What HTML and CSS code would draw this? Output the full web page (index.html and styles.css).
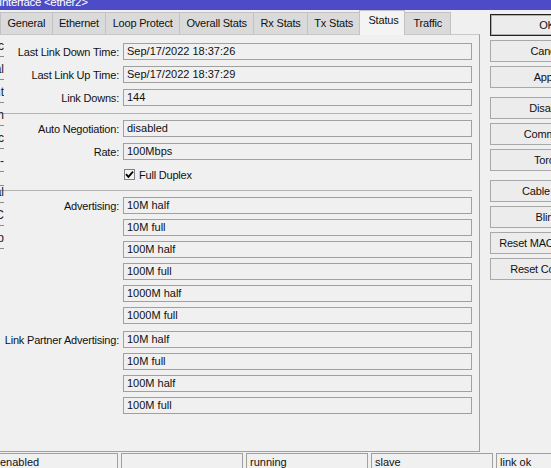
FILE: index.html
```html
<!DOCTYPE html>
<html>
<head>
<meta charset="utf-8">
<link rel="stylesheet" href="styles.css">
</head>
<body>
<div class="title"><span class="title-text">Interface &lt;ether2&gt;</span></div>
<div class="main">
  <div class="dlg">
    <div class="tabs">
      <div class="tab">General</div>
      <div class="tab">Ethernet</div>
      <div class="tab">Loop Protect</div>
      <div class="tab">Overall Stats</div>
      <div class="tab">Rx Stats</div>
      <div class="tab">Tx Stats</div>
      <div class="tab active">Status</div>
      <div class="tab last">Traffic</div>
    </div>
    <div class="panel">
      <div class="ghost">
        <div class="gl"><span>ic</span></div>
        <div class="gl"><span>al</span></div>
        <div class="gl"><span>nt</span></div>
        <div class="gl"><span>in</span></div>
        <div class="gl"><span>ic</span></div>
        <div class="gl"><span>-</span></div>
        <div class="gl gap"></div>
        <div class="gl"><span>al</span></div>
        <div class="gl"><span>C</span></div>
        <div class="gl"><span>op</span></div>
      </div>
      <div class="group">
        <div class="row"><div class="lbl">Last Link Down Time:</div><div class="fld">Sep/17/2022 18:37:26</div></div>
        <div class="row"><div class="lbl">Last Link Up Time:</div><div class="fld">Sep/17/2022 18:37:29</div></div>
        <div class="row"><div class="lbl">Link Downs:</div><div class="fld">144</div></div>
      </div>
      <div class="sep"></div>
      <div class="group">
        <div class="row"><div class="lbl">Auto Negotiation:</div><div class="fld">disabled</div></div>
        <div class="row"><div class="lbl">Rate:</div><div class="fld">100Mbps</div></div>
        <div class="row"><div class="lbl"></div><div class="chk"><span class="box"><svg width="9" height="9" viewBox="0 0 9 9"><path d="M1 4.2 L3.4 6.8 L8 1.6" fill="none" stroke="#000" stroke-width="1.8"/></svg></span><span class="chk-text">Full Duplex</span></div></div>
      </div>
      <div class="sep"></div>
      <div class="list">
        <div class="row"><div class="lbl">Advertising:</div><div class="fld">10M half</div></div>
        <div class="row"><div class="lbl"></div><div class="fld">10M full</div></div>
        <div class="row"><div class="lbl"></div><div class="fld">100M half</div></div>
        <div class="row"><div class="lbl"></div><div class="fld">100M full</div></div>
        <div class="row"><div class="lbl"></div><div class="fld">1000M half</div></div>
        <div class="row"><div class="lbl"></div><div class="fld">1000M full</div></div>
      </div>
      <div class="list list-lp">
        <div class="row"><div class="lbl">Link Partner Advertising:</div><div class="fld">10M half</div></div>
        <div class="row"><div class="lbl"></div><div class="fld">10M full</div></div>
        <div class="row"><div class="lbl"></div><div class="fld">100M half</div></div>
        <div class="row"><div class="lbl"></div><div class="fld">100M full</div></div>
      </div>
    </div>
  </div>
  <div class="btns">
    <div class="bgroup">
      <div class="btn default">OK</div>
      <div class="btn">Cancel</div>
      <div class="btn">Apply</div>
    </div>
    <div class="bgroup">
      <div class="btn">Disable</div>
      <div class="btn">Comment</div>
      <div class="btn">Torch</div>
    </div>
    <div class="bgroup">
      <div class="btn">Cable Test</div>
      <div class="btn">Blink</div>
      <div class="btn">Reset MAC Address</div>
      <div class="btn">Reset Counters</div>
    </div>
  </div>
</div>
<div class="status">
  <div class="seg first">enabled</div>
  <div class="seg"></div>
  <div class="seg">running</div>
  <div class="seg">slave</div>
  <div class="seg">link ok</div>
</div>
</body>
</html>
```
FILE: styles.css
```css
html, body {
  margin: 0;
  padding: 0;
}
body {
  width: 551px;
  height: 468px;
  overflow: hidden;
  background: #f0f0f0;
  font-family: "Liberation Sans", Arial, sans-serif;
  font-size: 11px;
  color: #111;
}
.title {
  height: 10px;
  background: #4d4bc6;
  overflow: hidden;
}
.title-text {
  display: block;
  color: #fff;
  font-size: 11.5px;
  line-height: 12px;
  margin-top: -4px;
  margin-left: -1px;
  letter-spacing: -0.3px;
}
.main {
  display: flex;
  height: 443px;
}
.dlg {
  display: flex;
  flex-direction: column;
  width: 480px;
}
.tabs {
  display: flex;
  align-items: flex-end;
  height: 24px;
}
.tab {
  height: 22px;
  box-sizing: border-box;
  padding: 0 6.4px;
  line-height: 21px;
  background: #dadada;
  border: 1px solid #c2c2c2;
  border-bottom: none;
  margin-right: -1px;
  letter-spacing: -0.2px;
  white-space: nowrap;
}
.tab.active {
  height: 25px;
  margin-bottom: -1px;
  background: #f4f4f4;
  line-height: 19px;
  padding: 0 6px 0 8px;
  position: relative;
  z-index: 1;
}
.tab.last {
  padding: 0 7.5px 0 8px;
}
.panel {
  position: relative;
  height: 418px;
  box-sizing: border-box;
  border-top: 1px solid #c8c8c8;
  border-right: 1px solid #a0a0a0;
  border-bottom: 1px solid #a0a0a0;
  padding: 8px 7px 0 0;
}
.ghost {
  position: absolute;
  left: 0;
  top: 5px;
  width: 4px;
  display: flex;
  flex-direction: column;
}
.gl {
  width: 4px;
  height: 23px;
  display: flex;
  flex-direction: column;
  align-items: flex-end;
  overflow: hidden;
  font-size: 12px;
  line-height: 12px;
  color: #222;
}
.gl::after {
  content: "";
  display: block;
  width: 4px;
  height: 1px;
  margin-top: 4px;
  background: #8a8a8a;
}
.gl span {
  white-space: nowrap;
}
.gl.gap {
  height: 8px;
}
.gl.gap::after {
  margin-top: 7px;
}
.group {
  display: flex;
  flex-direction: column;
  gap: 6px;
}
.list {
  display: flex;
  flex-direction: column;
  gap: 5px;
}
.list-lp {
  margin-top: 7px;
}
.row {
  display: flex;
  align-items: center;
  height: 17px;
}
.lbl {
  width: 123px;
  flex: none;
  box-sizing: border-box;
  padding-right: 4px;
  text-align: right;
  letter-spacing: -0.2px;
  white-space: nowrap;
}
.fld {
  width: 349px;
  height: 17px;
  box-sizing: border-box;
  border: 1px solid #a0a0a0;
  padding-left: 3px;
  line-height: 15px;
  white-space: nowrap;
}
.sep {
  height: 1px;
  background: #b4b4b4;
  margin: 7px 0 6px 0;
}
.chk {
  display: flex;
  align-items: center;
  margin-left: 1px;
}
.box {
  width: 11px;
  height: 11px;
  box-sizing: border-box;
  border: 1px solid #808080;
  background: #f4f4f4;
  display: flex;
  align-items: center;
  justify-content: center;
}
.chk-text {
  margin-left: 4px;
  letter-spacing: -0.2px;
}
.btns {
  margin-left: 10px;
  padding-top: 4px;
  display: flex;
  flex-direction: column;
  gap: 9px;
}
.bgroup {
  display: flex;
  flex-direction: column;
  gap: 4px;
}
.btn {
  width: 114px;
  height: 22px;
  box-sizing: border-box;
  border: 1px solid #a8a8a8;
  background: #ececec;
  text-align: center;
  line-height: 20px;
  white-space: nowrap;
  letter-spacing: -0.2px;
}
.btn.default {
  border: 1px solid #222;
  box-shadow: inset 0 0 0 1px #b0b0b0;
}
.status {
  display: flex;
  gap: 3px;
  margin-top: 0;
}
.seg {
  width: 122px;
  height: 20px;
  flex: none;
  box-sizing: border-box;
  border: 1px solid #a0a0a0;
  border-bottom: none;
  padding: 2px 0 0 3px;
  line-height: 13px;
  white-space: nowrap;
}
.seg.first {
  margin-left: -4px;
}
```
